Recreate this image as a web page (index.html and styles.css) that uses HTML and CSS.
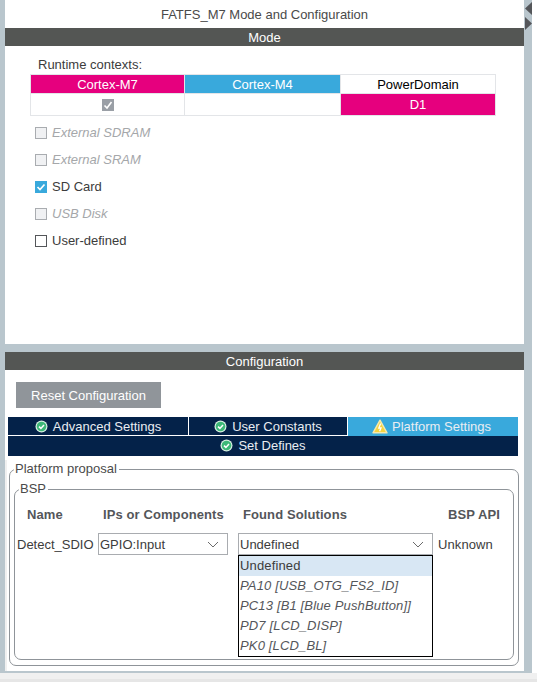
FILE: index.html
```html
<!DOCTYPE html>
<html lang="en">
<head>
  <meta charset="UTF-8">
  <title>FATFS_M7 Mode and Configuration</title>
  <link rel="stylesheet" href="styles.css">
</head>
<body>

  <div class="workspace">
    <main class="main">
      <section class="panel panel-mode">
        <div class="panel-title">FATFS_M7 Mode and Configuration</div>
        <div class="bar">Mode</div>

        <div class="runtime-label">Runtime contexts:</div>
        <div class="runtime-table">
          <div class="cell head-m7">Cortex-M7</div>
          <div class="cell head-m4">Cortex-M4</div>
          <div class="cell head-pd">PowerDomain</div>
          <div class="cell"><span class="mini-check">
            <svg width="12" height="12" viewBox="0 0 12 12"><path d="M2.5 6.5 L5 9 L9.5 3" fill="none" stroke="#fff" stroke-width="1.6"/></svg>
          </span></div>
          <div class="cell"></div>
          <div class="cell head-m7">D1</div>
        </div>

        <ul class="mode-list">
          <li class="mode-item disabled"><span class="box"></span>External SDRAM</li>
          <li class="mode-item disabled"><span class="box"></span>External SRAM</li>
          <li class="mode-item"><span class="box checked">
            <svg width="12" height="12" viewBox="0 0 12 12"><path d="M2.5 6 L5 8.5 L9.5 3.5" fill="none" stroke="#fff" stroke-width="1.7"/></svg>
          </span>SD Card</li>
          <li class="mode-item disabled"><span class="box"></span>USB Disk</li>
          <li class="mode-item"><span class="box"></span>User-defined</li>
        </ul>
      </section>

      <section class="panel panel-config">
        <div class="bar">Configuration</div>
        <button class="reset-btn">Reset Configuration</button>

        <div class="tabs">
          <div class="tab tab-advanced">
            <svg class="ok-icon" width="13" height="13" viewBox="0 0 13 13"><circle cx="6.5" cy="6.5" r="6" fill="#d9efe3"/><circle cx="6.5" cy="6.5" r="4.8" fill="#3cb878"/><path d="M4 6.6 L5.9 8.4 L9 5" fill="none" stroke="#fff" stroke-width="1.5"/></svg>
            Advanced Settings
          </div>
          <div class="tab tab-constants">
            <svg class="ok-icon" width="13" height="13" viewBox="0 0 13 13"><circle cx="6.5" cy="6.5" r="6" fill="#d9efe3"/><circle cx="6.5" cy="6.5" r="4.8" fill="#3cb878"/><path d="M4 6.6 L5.9 8.4 L9 5" fill="none" stroke="#fff" stroke-width="1.5"/></svg>
            User Constants
          </div>
          <div class="tab tab-platform">
            <svg class="warn-icon" width="16" height="15" viewBox="0 0 16 15"><path d="M8 1.2 L15 13.8 L1 13.8 Z" fill="#f5d33f" stroke="#f6e9ad" stroke-width="1.4" stroke-linejoin="round"/><path d="M8.6 4.5 L6.8 9 L9 9 L7.6 12.2" fill="none" stroke="#fff" stroke-width="1.3"/></svg>
            Platform Settings
          </div>
          <div class="tab tab-defines">
            <svg class="ok-icon" width="13" height="13" viewBox="0 0 13 13"><circle cx="6.5" cy="6.5" r="6" fill="#d9efe3"/><circle cx="6.5" cy="6.5" r="4.8" fill="#3cb878"/><path d="M4 6.6 L5.9 8.4 L9 5" fill="none" stroke="#fff" stroke-width="1.5"/></svg>
            Set Defines
          </div>
        </div>

        <div class="tab-content">
          <fieldset class="group group-platform">
            <legend>Platform proposal</legend>
            <fieldset class="group group-bsp">
              <legend>BSP</legend>
              <div class="bsp-grid">
                <div class="col-head col-name">Name</div>
                <div class="col-head col-ips">IPs or Components</div>
                <div class="col-head col-found">Found Solutions</div>
                <div class="col-head col-api">BSP API</div>

                <div class="row-name">Detect_SDIO</div>
                <div class="select select-ip">GPIO:Input
                  <svg class="chevron" width="12" height="7" viewBox="0 0 12 7"><path d="M1 1 L6 6 L11 1" fill="none" stroke="#6b6b6b"/></svg>
                </div>
                <div class="select-wrap">
                  <div class="select">Undefined
                    <svg class="chevron" width="12" height="7" viewBox="0 0 12 7"><path d="M1 1 L6 6 L11 1" fill="none" stroke="#6b6b6b"/></svg>
                  </div>
                  <ul class="dropdown">
                    <li class="selected">Undefined</li>
                    <li>PA10 [USB_OTG_FS2_ID]</li>
                    <li>PC13 [B1 [Blue PushButton]]</li>
                    <li>PD7 [LCD_DISP]</li>
                    <li>PK0 [LCD_BL]</li>
                  </ul>
                </div>
                <div class="row-api">Unknown</div>
              </div>
            </fieldset>
          </fieldset>
        </div>
      </section>
    </main>

    <div class="side-strip">
      <svg width="8" height="32" viewBox="0 0 8 32"><path d="M8 2 L1 8.5 L8 15 Z" fill="#54565a"/><path d="M1 17 L8 23.5 L1 30 Z" fill="#54565a"/></svg>
    </div>
  </div>

  <div class="bottom-band"></div>

</body>
</html>
```

FILE: styles.css
```css
* {
  box-sizing: border-box;
}
body {
  margin: 0;
  height: 682px;
  overflow: hidden;
  background: #fff;
  font-family: "Liberation Sans", Arial, sans-serif;
  font-size: 13px;
  color: #3c3c3c;
}
.workspace {
  display: flex;
  height: 673px;
}
.main {
  width: 524px;
  padding: 0 0 2px 5px;
  background: #b9c6cd;
  display: flex;
  flex-direction: column;
  gap: 8px;
}
.side-strip {
  width: 8px;
  background: #b9c6cd;
}
.side-strip svg {
  display: block;
}
.bottom-band {
  height: 9px;
  background: #f0f0f0;
  border-bottom: 3px solid #e6e6e6;
}

.panel {
  background: #fff;
}
.panel-mode {
  height: 345px;
}
.panel-config {
  flex: 1;
}
.panel-title {
  height: 28px;
  line-height: 29px;
  text-align: center;
  color: #4a4a4a;
}
.bar {
  height: 18px;
  line-height: 19px;
  background: #545654;
  color: #fff;
  text-align: center;
}

.runtime-label {
  margin: 11px 0 0 33px;
  height: 17px;
  line-height: 15px;
}
.runtime-table {
  margin-left: 25px;
  width: 466px;
  display: grid;
  grid-template-columns: 153px 155px 154px;
  grid-template-rows: 18px 21px;
  gap: 1px;
  padding: 1px;
  background: #e3e5e8;
}
.cell {
  background: #fff;
  display: flex;
  align-items: center;
  justify-content: center;
  color: #000;
}
.head-m7 {
  background: #e6007e;
  color: #fff;
}
.head-m4 {
  background: #39a9dc;
  color: #fff;
}
.mini-check {
  width: 12px;
  height: 12px;
  background: #9a9fa6;
  display: block;
}
.mini-check svg {
  display: block;
}

.mode-list {
  list-style: none;
  margin: 3px 0 0;
  padding: 0 0 0 30px;
}
.mode-item {
  height: 27px;
  display: flex;
  align-items: center;
  gap: 5px;
  color: #3c3c3c;
}
.mode-item.disabled {
  color: #a5a7aa;
  font-style: italic;
}
.box {
  width: 12px;
  height: 12px;
  border: 1px solid #54565a;
  background: #fff;
  display: block;
}
.disabled .box {
  border-color: #a9acb0;
  background: #f0f1f3;
}
.box.checked {
  border: 0;
  background: #39a9dc;
}
.box svg {
  display: block;
}

.reset-btn {
  display: block;
  margin: 12px 0 0 11px;
  width: 145px;
  height: 26px;
  border: 0;
  background: #90959a;
  color: #fff;
  font-family: inherit;
  font-size: 13px;
}

.tabs {
  margin: 9px 0 0 3px;
  width: 510px;
  height: 39px;
  display: grid;
  grid-template-columns: 181px 159px 170px;
  grid-template-rows: 18px 20px;
  row-gap: 1px;
  background: #fff;
}
.tab {
  display: flex;
  align-items: center;
  justify-content: center;
  gap: 5px;
  background: #042249;
  color: #e9edf2;
}
.tab-advanced,
.tab-constants {
  border-right: 1px solid #fff;
}
.tab-platform {
  gap: 4px;
  padding-right: 3px;
  background: #39a9dc;
  margin-bottom: -1px;
  position: relative;
  z-index: 1;
}
.tab-defines {
  grid-column: 1 / 4;
  padding-bottom: 2px;
}
.ok-icon,
.warn-icon {
  flex: none;
}

.tab-content {
  margin-top: 4px;
  height: 211px;
  background: #fff;
  box-shadow: inset 2px 0 0 #f0f0f0;
  padding: 2px 5px 0 4px;
}
.group {
  margin: 0;
  border: 1px solid #8f9499;
  border-radius: 7px;
  min-width: 0;
}
.group legend {
  padding: 0 2px 0 1px;
  line-height: 14px;
  font-size: 13px;
  color: #4a4a4a;
}
.group-platform {
  height: 204px;
  padding: 6px 4px 4px;
}
.group-bsp {
  height: 178px;
  padding: 3px 0 0 2px;
}
.group-bsp > legend {
  margin-left: 2px;
}

.bsp-grid {
  display: grid;
  grid-template-columns: 81px 140px 200px auto;
  grid-template-rows: 30px 24px;
  row-gap: 3px;
  align-items: center;
}
.col-head {
  font-weight: bold;
  letter-spacing: 0.1px;
  color: #54565a;
}
.col-name {
  padding-left: 10px;
}
.col-ips {
  padding-left: 5px;
}
.col-found {
  padding-left: 5px;
}
.col-api {
  padding-left: 10px;
  white-space: nowrap;
}
.row-name {
  white-space: nowrap;
}
.row-api {
  letter-spacing: 0.1px;
}
.select {
  height: 22px;
  display: flex;
  align-items: center;
  justify-content: space-between;
  padding: 0 8px 0 1px;
  border: 1px solid #a9acb0;
  background: #fff;
}
.select-ip {
  width: 130px;
}
.select-wrap {
  position: relative;
  width: 195px;
}
.chevron {
  flex: none;
}
.dropdown {
  position: absolute;
  top: 22px;
  left: 0;
  width: 195px;
  margin: 0;
  padding: 0;
  list-style: none;
  background: #fff;
  border: 1px solid #000;
  z-index: 2;
}
.dropdown li {
  height: 20px;
  line-height: 20px;
  padding-left: 1px;
  font-style: italic;
  letter-spacing: 0.15px;
  color: #54565a;
}
.dropdown li.selected {
  background: #d8e7f4;
  font-style: normal;
  color: #3c3c3c;
}
```
